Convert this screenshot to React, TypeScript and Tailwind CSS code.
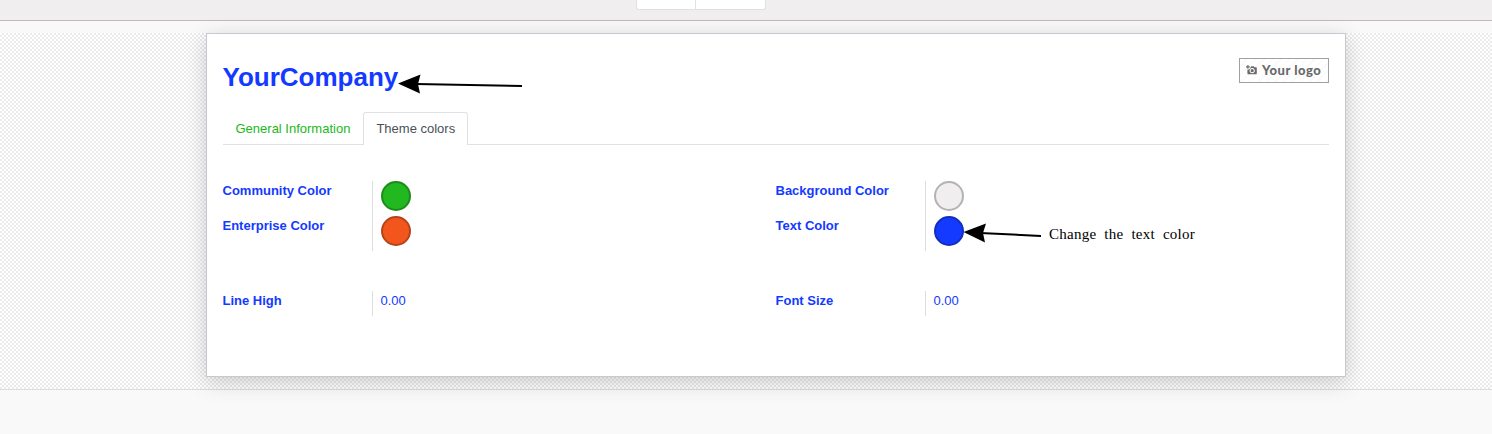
const GREEN = "bg-[#21b820] border-[#1c8c1b]";
const ORANGE = "bg-[#f2561d] border-[#b64419]";
const GREY = "bg-[#f0eeee] border-[#b4b3b3]";
const BLUE = "bg-[#1439ff] border-[#132fbc]";

type Entry = { label: string; swatch?: string; value?: string };

function Group({ entries }: { entries: Entry[] }) {
  return (
    <div className="flex-1">
      {entries.map(({ label, swatch, value }) => (
        <div key={label} className={`flex ${swatch ? "h-[35px]" : "h-[25px]"}`}>
          <div className="w-[150px] border-r border-[#dddddd] text-[13px] leading-[19.5px] font-bold">
            {label}
          </div>
          <div className="pl-2 text-[13px] leading-[19.5px]">
            {swatch ? <div className={`size-[30px] rounded-full border-2 ${swatch}`} /> : value}
          </div>
        </div>
      ))}
    </div>
  );
}

function LogoPlaceholder() {
  return (
    <div className="mt-2 flex h-[25px] w-[90px] items-center border border-[#a0a0a0] bg-[repeating-linear-gradient(135deg,#ffffff_0px,#ffffff_4px,#fafafa_4px,#fafafa_6px)] pl-[6.5px] text-[#6a6a6a]">
      <svg width="11" height="10" viewBox="0 0 11 10" className="mb-px shrink-0">
        <path d="M0 1.9h3.8M1.9 0v3.8" stroke="currentColor" strokeWidth="1.1" />
        <path
          fill="currentColor"
          fillRule="evenodd"
          d="M4.5 2.2 5.2 1.3h2.5l.8.9H10q.8 0 .8.8v5.6q0 .7-.8.7H2.2q-.8 0-.8-.7V4.4h1.5l1.6-1.5zM6.2 3.1a2.6 2.6 0 1 0 .01 0zM6.2 4.1a1.6 1.6 0 1 1-.01 0z"
        />
      </svg>
      <span className="mb-px ml-[5px] font-['Lato',sans-serif] text-[13px] leading-4 font-black tracking-[0.5px] whitespace-nowrap">
        Your logo
      </span>
    </div>
  );
}

export default function App() {
  return (
    <div className="relative flex h-[434px] w-[1492px] flex-col overflow-hidden bg-[#f9f9f9] font-['Liberation_Sans',Arial,sans-serif] text-[#1439ff]">
      <header className="flex h-[21px] shrink-0 items-start border-b border-[#c5b8bb] bg-[#f0eeee] pl-[636px]">
        <div className="flex h-[10px] w-[130px] rounded-b-[3px] border border-t-0 border-[#dee2e6] bg-white">
          <div className="w-[59px] border-r border-[#dee2e6]" />
        </div>
      </header>

      <main className="mt-3 flex h-[357px] shrink-0 items-start border-b border-[#dddddd] bg-[conic-gradient(#ebebeb_25%,#ffffff_0_50%,#ebebeb_0_75%,#ffffff_0)] bg-[length:4px_4px] pl-[206px]">
        <section className="h-[344px] w-[1140px] border border-[#c8c8d3] bg-white pt-4 pr-[16.5px] pl-[15.5px] shadow-[0_5px_20px_rgba(0,0,0,0.18)]">
          <div className="flex h-[62px] justify-between">
            <h1 className="pt-2 text-[26px] leading-[39px] font-bold">YourCompany</h1>
            <LogoPlaceholder />
          </div>

          <nav className="flex h-[33px] border-b border-[#dee2e6] text-[13px] leading-[19.5px]">
            <a className="h-[33px] border border-transparent px-3 pt-1.5 text-[#21b820]">General Information</a>
            <a className="h-[33px] rounded-t-[3px] border border-b-0 border-[#dee2e6] bg-white px-3 pt-1.5 text-[#495057]">
              Theme colors
            </a>
          </nav>

          <div className="flex pt-9">
            <Group entries={[{ label: "Community Color", swatch: GREEN }, { label: "Enterprise Color", swatch: ORANGE }]} />
            <Group entries={[{ label: "Background Color", swatch: GREY }, { label: "Text Color", swatch: BLUE }]} />
          </div>
          <div className="flex pt-10">
            <Group entries={[{ label: "Line High", value: "0.00" }]} />
            <Group entries={[{ label: "Font Size", value: "0.00" }]} />
          </div>
        </section>
      </main>

      <svg className="absolute top-[73px] left-[397px]" width="126" height="22" viewBox="397 73 126 22">
        <path d="M416 84 522 86" stroke="#000" strokeWidth="2" />
        <path d="M398 83.5 420.5 74.5 418 84 420 93.5z" />
      </svg>
      <svg className="absolute top-[222px] left-[962px]" width="80" height="22" viewBox="962 222 80 22">
        <path d="M980 233 1041 236" stroke="#000" strokeWidth="2" />
        <path d="M963.5 232 986 223.5 983 233 985 242.5z" />
      </svg>
      <p className="absolute top-[224px] left-[1049px] font-['Liberation_Serif',serif] text-[15px] leading-5 tracking-[0.25px] whitespace-nowrap text-black [word-spacing:4px]">
        Change the text color
      </p>
    </div>
  );
}
